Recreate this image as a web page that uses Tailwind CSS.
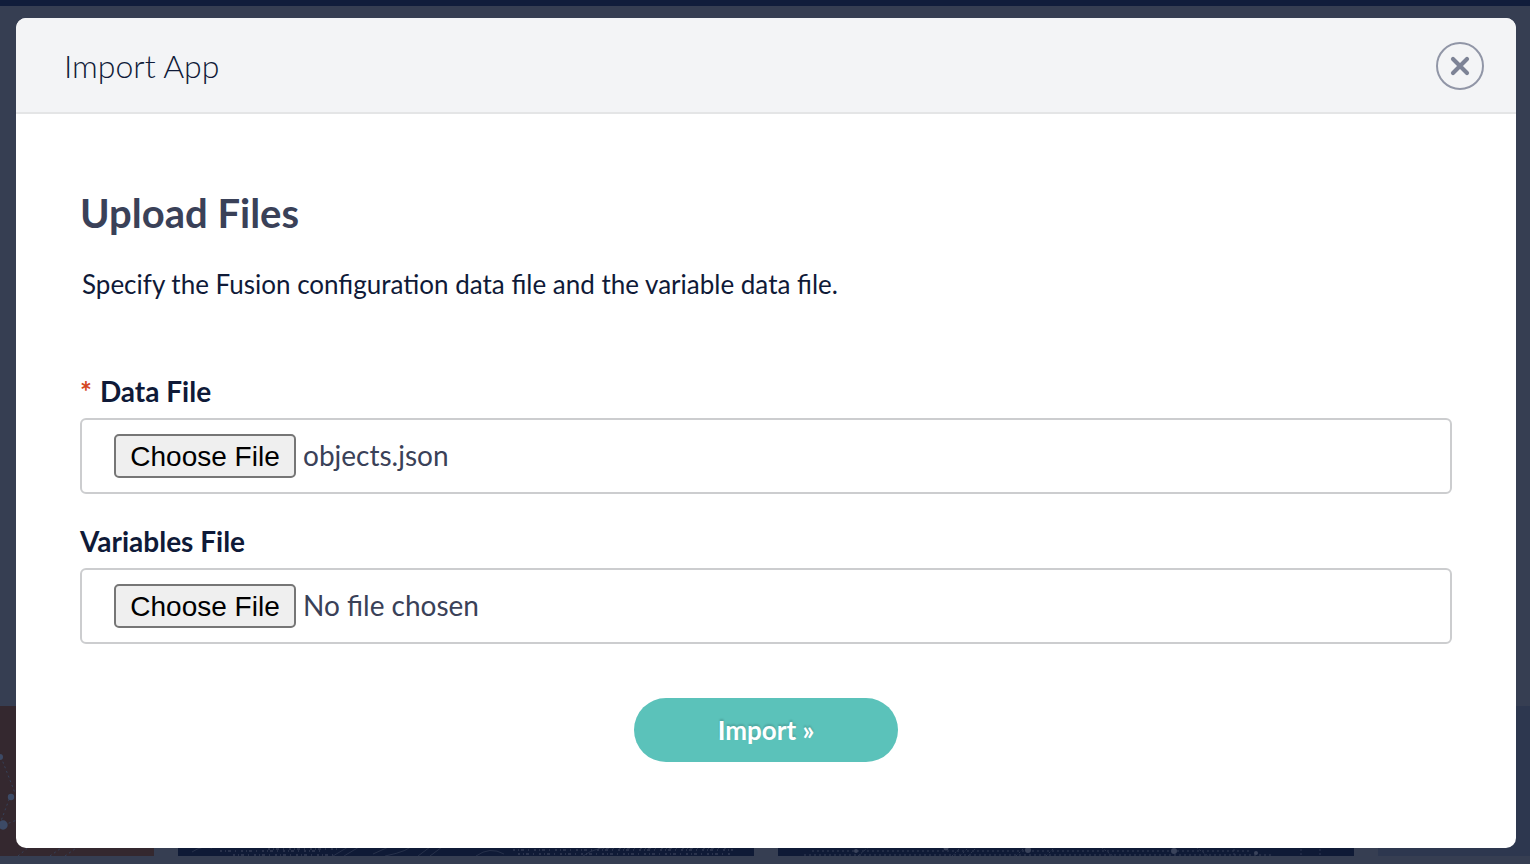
<!DOCTYPE html>
<html lang="en">
<head>
<meta charset="utf-8">
<title>Import App</title>
<script src="https://cdn.jsdelivr.net/npm/@tailwindcss/browser@4"></script>
</head>
<body class="relative h-[864px] overflow-hidden bg-[#363e52] font-['Lato',sans-serif] text-[#0f1a38]">
<!-- Dimmed gallery behind the dialog -->
<div class="flex h-full flex-col">
  <div class="h-1.5 bg-[#111d3b]"></div>
  <div class="flex-1"></div>
  <div class="mb-2 flex h-[150px] gap-6">
    <div class="w-[154px] bg-[#34282f]">
      <svg width="154" height="150" fill="none">
        <g stroke="#35425a" stroke-width="1" stroke-dasharray="2 3"><path d="M1 51 15 87M-2 123 10 91M4 119 22 112M18 150 30 140M50 150 64 140M65 150 82 138"/></g>
        <g fill="#3c4a66"><circle cx="0" cy="51" r="3"/><circle cx="11" cy="91" r="3.2"/><circle cx="3" cy="119" r="4.7"/></g>
      </svg>
    </div>
    <div class="w-[576px] bg-[#0f1a36]">
      <svg width="576" height="150" fill="none" stroke="#3a435b">
        <g stroke-width="1" opacity=".55"><path d="M14 146q10-7 20-4M195 148l20-9M207 150q25-5 28-12M240 150l16-12M252 150l16-12M298 150q14-10 28-2M405 150q14-10 30-8M155 150l20-12M166 150l20-12"/></g>
        <g stroke-width="2" stroke-dasharray="2 3 1 2 3 4 1 5" opacity=".6"><path d="M50 141h80M42 145h105M55 149h100M90 143h70M332 140h60M335 144h220M340 148h215M420 142h130"/></g>
      </svg>
    </div>
    <div class="w-[576px] bg-[#0f1a36]">
      <svg width="576" height="150" fill="none" stroke="#3a435b">
        <g stroke-width="2" stroke-dasharray="2 3" opacity=".45"><path d="M30 141h460M34 145h440M26 149h470"/></g>
        <g stroke-width="1" stroke-dasharray="2 2" opacity=".7"><path d="M80 150l14-12M174 150l12-12M182 150l12-12M190 150l12-12M238 150l12-12M268 150l12-12M320 139l15 11M415 139l15 11M456 139v11M523 139v11M542 139v11"/></g>
        <g fill="#3a435b" stroke="none"><circle cx="78" cy="145" r="2"/><circle cx="168" cy="142" r="2.5"/><circle cx="250" cy="144" r="3"/><circle cx="396" cy="145" r="3"/><circle cx="478" cy="147" r="2"/></g>
      </svg>
    </div>
    <div class="flex-1 bg-[#2d374f]"></div>
  </div>
</div>

<!-- Import dialog -->
<div class="absolute top-[18px] left-4 flex h-[830px] w-[1500px] flex-col overflow-hidden rounded-[10px] bg-white">
  <div class="flex h-24 items-center justify-between border-b-2 border-[#e4e5e6] bg-[#f3f4f6] pr-8 pl-12">
    <h1 class="pt-0.5 text-[32px] leading-10 font-light">Import App</h1>
    <button class="mt-0.5 h-12 w-12" aria-label="Close">
      <svg width="48" height="48" viewBox="0 0 48 48" fill="none"><circle cx="24" cy="24" r="23" stroke="#9196a7" stroke-width="2"/><path d="m17 17 14 14M31 17 17 31" stroke="#7d8396" stroke-width="4.2" stroke-linecap="round"/></svg>
    </button>
  </div>
  <div class="flex flex-1 flex-col px-16 pt-[75px]">
    <h2 class="text-[40px] leading-12 font-bold text-[#3a4158]">Upload Files</h2>
    <p class="mt-7 pl-0.5 text-[26px] leading-[38px]">Specify the Fusion configuration data file and the variable data file.</p>
    <label class="mt-[68px] flex h-10 items-center gap-2 text-[28px] font-bold"><span class="text-[#d5471f]">*</span>Data File</label>
    <div class="mt-[7px] flex h-[76px] items-center gap-2 rounded-md border-2 border-[#cccdcf] pl-8">
      <button class="h-11 w-[182px] rounded-[5px] border-2 border-[#767676] bg-[#efefef] pt-px font-['Liberation_Sans',sans-serif] text-[28px] leading-10 text-black">Choose File</button>
      <span class="-ml-px pb-0.5 text-[28px] text-[#3a4158]">objects.json</span>
    </div>
    <label class="mt-[27px] flex h-10 items-center text-[28px] font-bold">Variables File</label>
    <div class="mt-[7px] flex h-[76px] items-center gap-2 rounded-md border-2 border-[#cccdcf] pl-8">
      <button class="h-11 w-[182px] rounded-[5px] border-2 border-[#767676] bg-[#efefef] pt-px font-['Liberation_Sans',sans-serif] text-[28px] leading-10 text-black">Choose File</button>
      <span class="-ml-px pb-0.5 text-[28px] text-[#3a4158]">No file chosen</span>
    </div>
    <button class="mt-[54px] h-16 w-[264px] self-center rounded-full bg-[#5bc2ba] text-[26px] font-bold text-white [text-shadow:0_-2px_2px_rgba(0,0,0,0.15)]">Import »</button>
  </div>
</div>
</body>
</html>
